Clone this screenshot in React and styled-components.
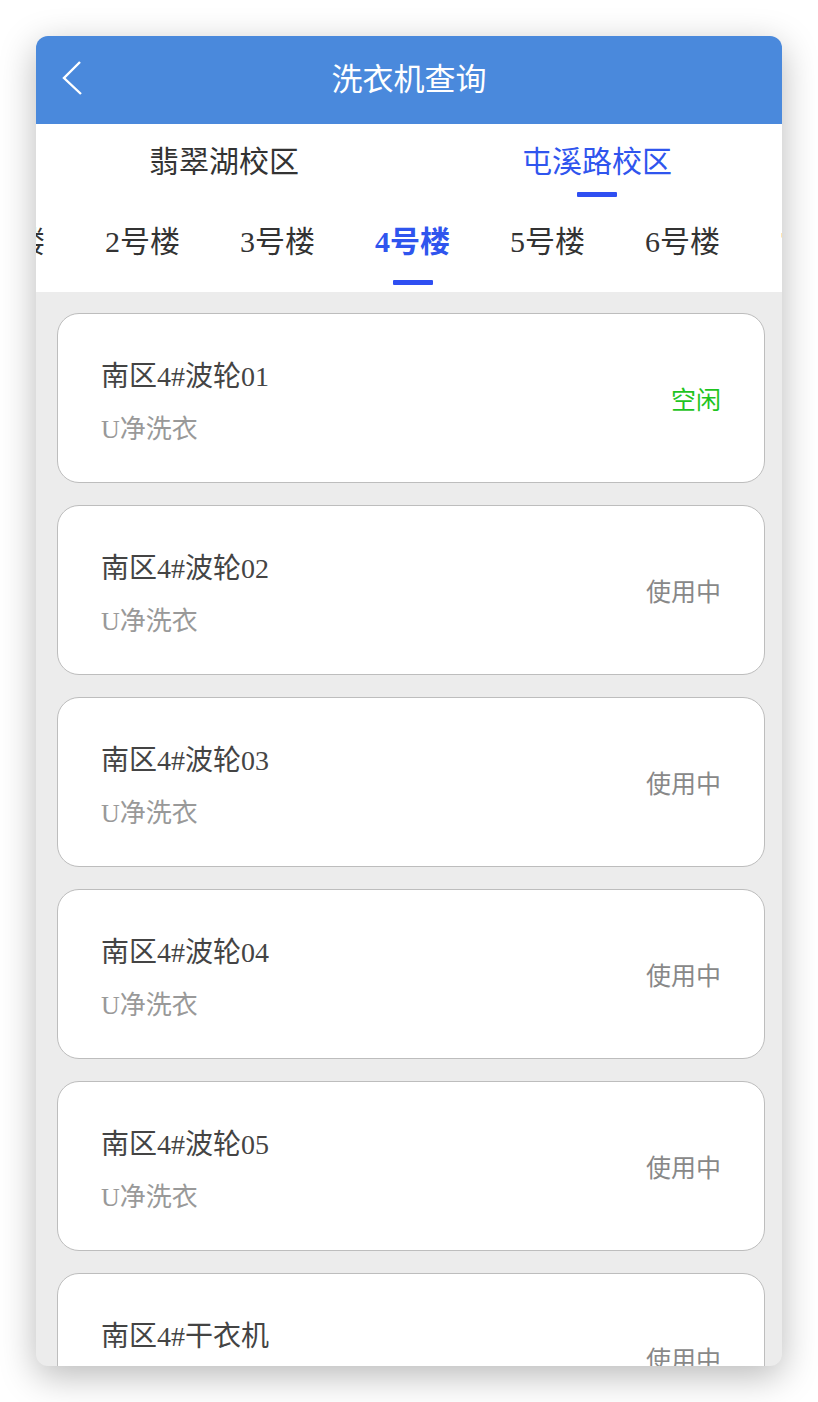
import React from 'react';
import styled, { createGlobalStyle } from 'styled-components';

const campuses = ['翡翠湖校区', '屯溪路校区'];
const buildings = ['1号楼', '2号楼', '3号楼', '4号楼', '5号楼', '6号楼', '7号楼'];
const machines = [
  { name: '南区4#波轮01', sub: 'U净洗衣', free: true },
  { name: '南区4#波轮02', sub: 'U净洗衣', free: false },
  { name: '南区4#波轮03', sub: 'U净洗衣', free: false },
  { name: '南区4#波轮04', sub: 'U净洗衣', free: false },
  { name: '南区4#波轮05', sub: 'U净洗衣', free: false },
  { name: '南区4#干衣机', sub: 'U净洗衣', free: false },
];

const App = () => {
  return (
    <Page>
      <GlobalStyle />
      <Phone>
        <Header>
          <BackButton>
            <svg width="22" height="36" viewBox="0 0 22 36">
              <polyline points="18,2 2,18 19,34" fill="none" stroke="#fff" strokeWidth="2.4" />
            </svg>
          </BackButton>
          <Title>洗衣机查询</Title>
        </Header>
        <CampusBar>
          {campuses.map((c, i) => (
            <CampusTab key={c} $active={i === 1}>
              <TabLabel>{c}</TabLabel>
              <Indicator $visible={i === 1} $top={10} />
            </CampusTab>
          ))}
        </CampusBar>
        <BuildingBar>
          <BuildingTrack>
            {buildings.map((b, i) => (
              <BuildingTab key={b} $active={i === 3}>
                <TabLabel>{b}</TabLabel>
                <Indicator $visible={i === 3} $top={18} />
              </BuildingTab>
            ))}
          </BuildingTrack>
        </BuildingBar>
        <List>
          {machines.map((m) => (
            <Card key={m.name}>
              <Info>
                <Name>{m.name}</Name>
                <Sub>{m.sub}</Sub>
              </Info>
              <Status $free={m.free}>{m.free ? '空闲' : '使用中'}</Status>
            </Card>
          ))}
        </List>
      </Phone>
    </Page>
  );
};

const GlobalStyle = createGlobalStyle`
  body {
    margin: 0;
    background: #fff;
    font-family: "Liberation Serif", "Noto Sans CJK SC", serif;
  }
`;

const Page = styled.div`
  padding: 36px;
  height: 1402px;
  box-sizing: border-box;
`;

const Phone = styled.div`
  height: 1330px;
  border-radius: 12px;
  overflow: hidden;
  background: #ececec;
  box-shadow: 0 10px 36px rgba(0, 0, 0, 0.28);
  display: flex;
  flex-direction: column;
`;

const Header = styled.div`
  height: 88px;
  flex-shrink: 0;
  background: #4a89dc;
  display: flex;
  align-items: center;
  justify-content: center;
  position: relative;
`;

const BackButton = styled.div`
  position: absolute;
  left: 26px;
  top: 24px;
  display: flex;
`;

const Title = styled.div`
  color: #fff;
  font-size: 31px;
  line-height: 40px;
`;

const CampusBar = styled.div`
  display: flex;
  background: #fff;
  height: 86px;
  flex-shrink: 0;
`;

const CampusTab = styled.div`
  flex: 1;
  display: flex;
  flex-direction: column;
  align-items: center;
  padding-top: 18px;
  padding-left: 3px;
  font-size: 30px;
  color: ${(p) => (p.$active ? '#2f55ee' : '#333')};
`;

const TabLabel = styled.div`
  line-height: 40px;
  white-space: nowrap;
`;

const Indicator = styled.div`
  width: 40px;
  height: 5px;
  border-radius: 1px;
  margin-top: ${(p) => p.$top}px;
  background: ${(p) => (p.$visible ? '#2f4ff2' : 'transparent')};
`;

const BuildingBar = styled.div`
  background: #fff;
  height: 82px;
  flex-shrink: 0;
  overflow: hidden;
`;

const BuildingTrack = styled.div`
  display: flex;
  margin-left: -96px;
`;

const BuildingTab = styled.div`
  width: 135px;
  flex-shrink: 0;
  display: flex;
  flex-direction: column;
  align-items: center;
  padding-top: 12px;
  font-size: 30px;
  color: ${(p) => (p.$active ? '#2f55ee' : '#333')};
  font-weight: ${(p) => (p.$active ? 700 : 400)};
`;

const List = styled.div`
  display: flex;
  flex-direction: column;
  gap: 22px;
  padding: 21px 17px 0 21px;
`;

const Card = styled.div`
  height: 170px;
  flex-shrink: 0;
  box-sizing: border-box;
  background: #fff;
  border: 1.5px solid #bdbdbd;
  border-radius: 22px;
  display: flex;
  align-items: center;
  justify-content: space-between;
  padding: 0 43px;
`;

const Info = styled.div`
  display: flex;
  flex-direction: column;
  gap: 15px;
  margin-top: 9px;
`;

const Name = styled.div`
  font-size: 28px;
  line-height: 40px;
  color: #444;
`;

const Sub = styled.div`
  font-size: 26px;
  line-height: 36px;
  color: #999;
`;

const Status = styled.div`
  font-size: 25px;
  line-height: 36px;
  margin-top: 6px;
  color: ${(p) => (p.$free ? '#1fc41f' : '#888')};
`;

export default App;
